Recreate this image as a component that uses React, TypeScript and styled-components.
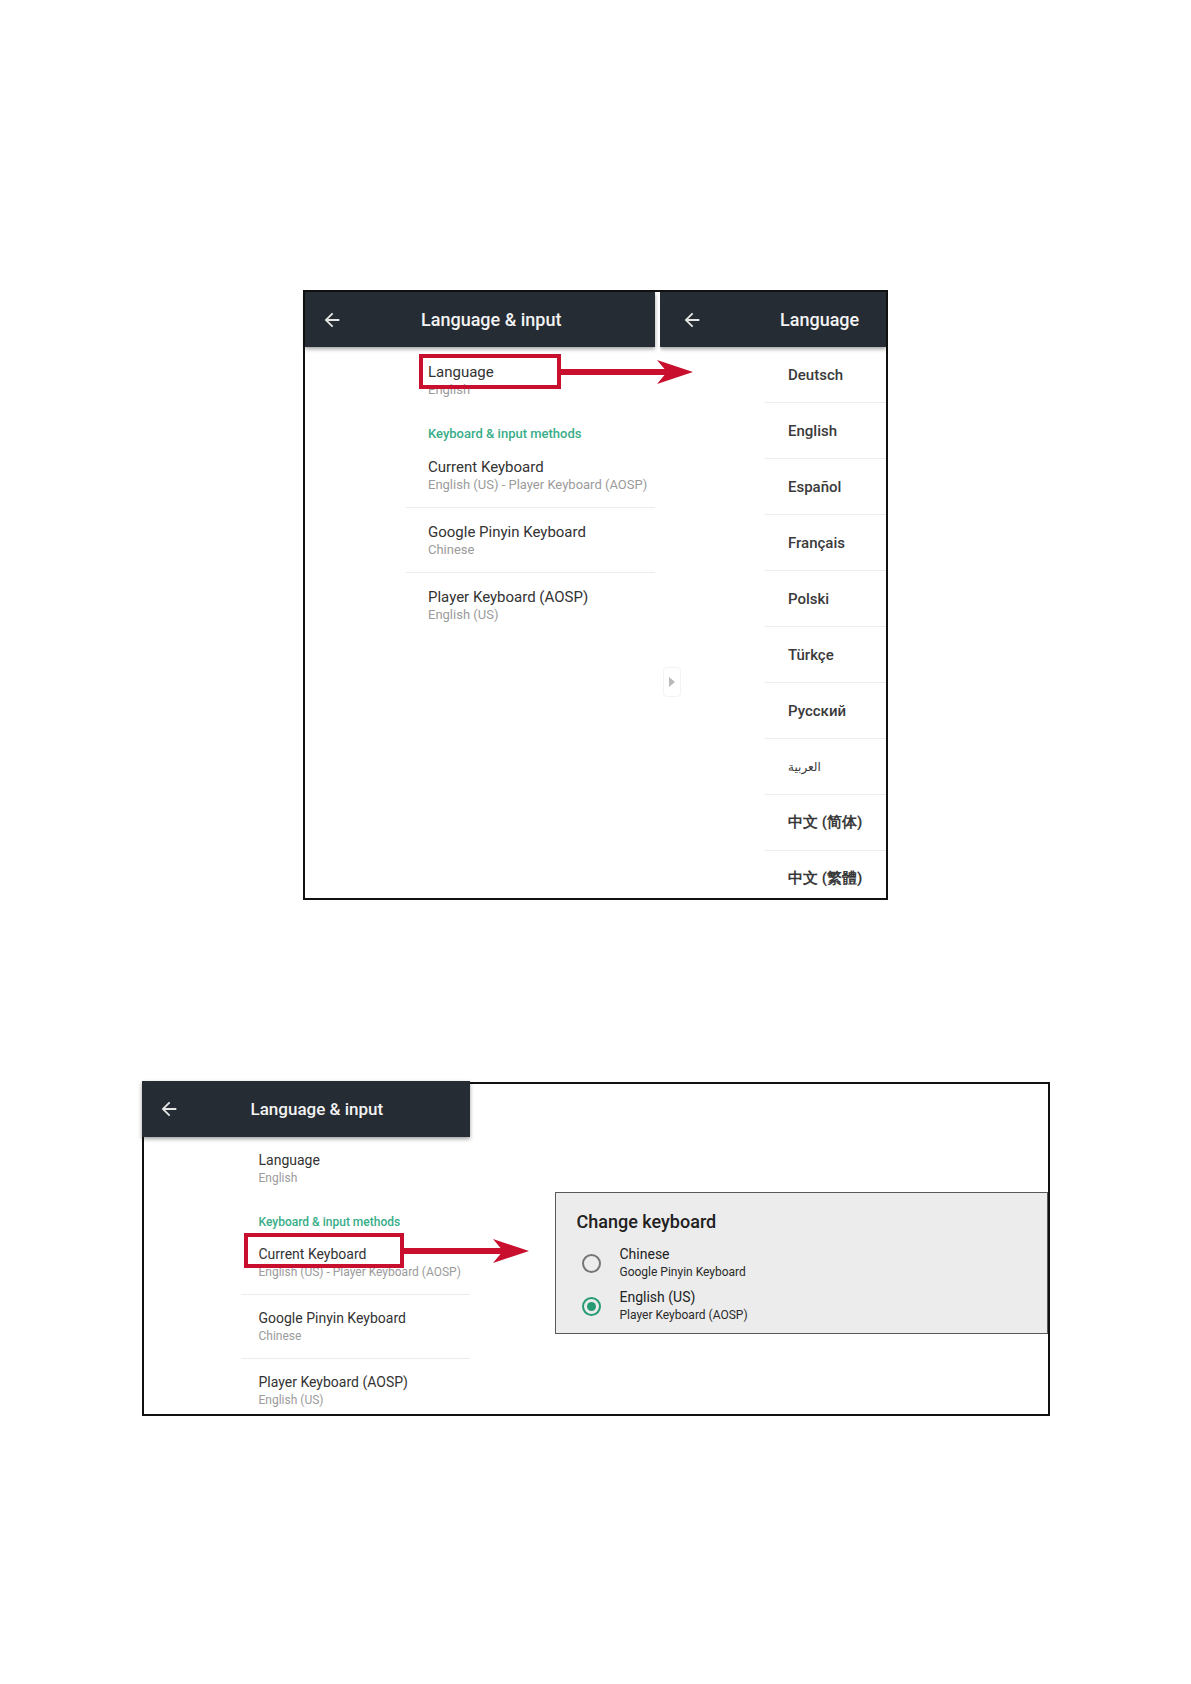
import styled, { createGlobalStyle } from "styled-components";

const GlobalStyle = createGlobalStyle`
  html, body {
    margin: 0;
    padding: 0;
    background: #ffffff;
  }
  body {
    font-family: Roboto, "Noto Sans", "DejaVu Sans", sans-serif;
    color: #333333;
  }
`;

const ACCENT = "#38ad88";
const RADIO_GREEN = "#279b74";
const ANNOTATION_RED = "#c8102e";

const Page = styled.div`
  display: flex;
  flex-direction: column;
  align-items: center;
  gap: 182px;
  padding-top: 290px;
  min-height: 1684px;
  box-sizing: border-box;
`;

const Frame = styled.div<{ $w: number; $h: number }>`
  position: relative;
  display: flex;
  width: ${({ $w }) => $w}px;
  height: ${({ $h }) => $h}px;
  box-sizing: border-box;
  border: 2px solid #111111;
  background: #ffffff;
`;

const Panel = styled.div<{ $w?: number }>`
  display: flex;
  flex-direction: column;
  width: ${({ $w }) => ($w ? `${$w}px` : "auto")};
  flex: ${({ $w }) => ($w ? "0 0 auto" : "1 1 auto")};
  min-width: 0;
`;

const ClipPanel = styled(Panel)`
  overflow: hidden;
`;

const PanelGap = styled.div`
  width: 5px;
  flex: 0 0 auto;
  background: #ffffff;
`;

const AppBar = styled.div<{ $h: number; $bleed?: boolean }>`
  position: relative;
  z-index: 1;
  display: flex;
  align-items: center;
  flex: 0 0 auto;
  height: ${({ $h }) => $h}px;
  margin: ${({ $bleed }) => ($bleed ? "-3px 0 0 -2px" : "0")};
  background: #262c33;
  box-shadow: 0 2px 4px rgba(0, 0, 0, 0.38);
`;

const BackButton = styled.span<{ $left: number }>`
  display: flex;
  margin-left: ${({ $left }) => $left}px;
  color: #e6e6e6;
`;

const BarTitle = styled.h1<{ $left: number; $size: number }>`
  margin: 0 0 0 ${({ $left }) => $left}px;
  font-size: ${({ $size }) => $size}px;
  font-weight: 500;
  color: #f3f3f3;
  white-space: nowrap;
`;

const SettingsList = styled.div`
  display: flex;
  flex-direction: column;
  overflow: hidden;
`;

const SettingItem = styled.div<{
  $indent: number;
  $pad: number;
  $top: number;
  $divider?: boolean;
}>`
  margin-left: ${({ $indent }) => $indent}px;
  padding: ${({ $top }) => $top}px 0 13px ${({ $pad }) => $pad}px;
  border-bottom: ${({ $divider }) => ($divider ? "1px solid #ececec" : "none")};
`;

const ItemTitle = styled.div<{ $size: number }>`
  font-size: ${({ $size }) => $size}px;
  line-height: 18px;
  color: #333333;
  white-space: nowrap;
`;

const ItemSub = styled.div<{ $size: number }>`
  font-size: ${({ $size }) => $size}px;
  line-height: 18px;
  color: #9b9b9b;
  white-space: nowrap;
`;

const CategoryHeading = styled.div<{ $indent: number; $size: number }>`
  margin: 13px 0 0 ${({ $indent }) => $indent}px;
  font-size: ${({ $size }) => $size}px;
  line-height: 18px;
  font-weight: 500;
  color: ${ACCENT};
  white-space: nowrap;
`;

const LanguageList = styled.div`
  display: flex;
  flex-direction: column;
`;

const LanguageRow = styled.div<{ $size?: number; $weight?: number }>`
  display: flex;
  align-items: center;
  flex: 0 0 auto;
  height: 55px;
  margin-left: 105px;
  padding-left: 23px;
  border-bottom: 1px solid #ececec;
  font-size: ${({ $size }) => $size ?? 15}px;
  font-weight: ${({ $weight }) => $weight ?? 500};
  color: #3a3a3a;
  white-space: nowrap;
`;

const ScrollHandle = styled.div`
  position: absolute;
  left: 358px;
  top: 375px;
  width: 18px;
  height: 30px;
  box-sizing: border-box;
  border: 1px solid #f3f3f3;
  border-radius: 4px;
  display: flex;
  align-items: center;
  justify-content: center;

  &::after {
    content: "";
    border-left: 6px solid #b9b9b9;
    border-top: 5px solid transparent;
    border-bottom: 5px solid transparent;
  }
`;

const HighlightBox = styled.div<{ $x: number; $y: number; $w: number; $h: number }>`
  position: absolute;
  left: ${({ $x }) => $x}px;
  top: ${({ $y }) => $y}px;
  width: ${({ $w }) => $w}px;
  height: ${({ $h }) => $h}px;
  box-sizing: border-box;
  border: 4px solid ${ANNOTATION_RED};
  z-index: 2;
`;

const ArrowWrap = styled.svg<{ $x: number; $y: number }>`
  position: absolute;
  left: ${({ $x }) => $x}px;
  top: ${({ $y }) => $y}px;
  z-index: 2;
`;

const DialogArea = styled.div`
  flex: 1 1 auto;
  padding: 108px 0 0 85px;
  min-width: 0;
`;

const Dialog = styled.div`
  box-sizing: border-box;
  background: #ececec;
  border: 1px solid #595959;
  padding: 18px 0 9px 21px;
`;

const DialogTitle = styled.h2`
  margin: 0;
  font-size: 18px;
  line-height: 22px;
  font-weight: 500;
  color: #212121;
`;

const Options = styled.div`
  display: flex;
  flex-direction: column;
  gap: 7px;
  margin-top: 12px;
`;

const Option = styled.div`
  display: flex;
  align-items: center;
`;

const Radio = styled.span<{ $checked?: boolean }>`
  position: relative;
  flex: 0 0 auto;
  width: 19px;
  height: 19px;
  margin: 0 19px 0 5px;
  box-sizing: border-box;
  border-radius: 50%;
  border: 2px solid ${({ $checked }) => ($checked ? RADIO_GREEN : "#767676")};

  &::after {
    content: "";
    display: ${({ $checked }) => ($checked ? "block" : "none")};
    position: absolute;
    left: 3px;
    top: 3px;
    width: 9px;
    height: 9px;
    border-radius: 50%;
    background: ${RADIO_GREEN};
  }
`;

const OptionTitle = styled.div`
  font-size: 14px;
  line-height: 18px;
  color: #222222;
`;

const OptionSub = styled.div`
  font-size: 12px;
  line-height: 18px;
  color: #2a2a2a;
`;

const BackArrow = () => (
  <svg width="22" height="22" viewBox="0 0 24 24" fill="currentColor">
    <path d="M20 11H7.83l5.59-5.59L12 4l-8 8 8 8 1.41-1.41L7.83 13H20v-2z" />
  </svg>
);

const RedArrow = ({ x, y, length }: { x: number; y: number; length: number }) => (
  <ArrowWrap $x={x} $y={y} width={length} height={24} viewBox={`0 0 ${length} 24`}>
    <rect x={0} y={9} width={length - 26} height={6} fill={ANNOTATION_RED} />
    <path
      d={`M${length - 36} 0 L${length} 12 L${length - 36} 24 L${length - 26} 12 Z`}
      fill={ANNOTATION_RED}
    />
  </ArrowWrap>
);

interface SettingsProps {
  compact?: boolean;
}

const keyboards = [
  { title: "Current Keyboard", sub: "English (US) - Player Keyboard (AOSP)" },
  { title: "Google Pinyin Keyboard", sub: "Chinese" },
  { title: "Player Keyboard (AOSP)", sub: "English (US)" },
];

const LanguageSettings = ({ compact }: SettingsProps) => {
  const indent = compact ? 97 : 101;
  const pad = compact ? 18 : 22;
  const titleSize = compact ? 14 : 15;
  const subSize = compact ? 12 : 13;
  return (
    <SettingsList>
      <SettingItem $indent={indent} $pad={pad} $top={compact ? 14 : 16}>
        <ItemTitle $size={titleSize}>Language</ItemTitle>
        <ItemSub $size={subSize}>English</ItemSub>
      </SettingItem>
      <CategoryHeading $indent={indent + pad} $size={subSize}>
        Keyboard &amp; input methods
      </CategoryHeading>
      {keyboards.map((k, i) => (
        <SettingItem
          key={k.title}
          $indent={indent}
          $pad={pad}
          $top={compact ? 14 : 15}
          $divider={i < keyboards.length - 1}
        >
          <ItemTitle $size={titleSize}>{k.title}</ItemTitle>
          <ItemSub $size={subSize}>{k.sub}</ItemSub>
        </SettingItem>
      ))}
    </SettingsList>
  );
};

const languages: { label: string; size?: number; weight?: number; lang?: string }[] = [
  { label: "Deutsch" },
  { label: "English" },
  { label: "Español" },
  { label: "Français" },
  { label: "Polski" },
  { label: "Türkçe" },
  { label: "Русский" },
  { label: "العربية", size: 12 },
  { label: "中文 (简体)", weight: 700, lang: "zh-Hans" },
  { label: "中文 (繁體)", weight: 700, lang: "zh-Hant" },
];

const App = () => (
  <>
    <GlobalStyle />
    <Page>
      <Frame $w={585} $h={610}>
        <Panel $w={350}>
          <AppBar $h={55}>
            <BackButton $left={16}>
              <BackArrow />
            </BackButton>
            <BarTitle $left={78} $size={18}>
              Language &amp; input
            </BarTitle>
          </AppBar>
          <LanguageSettings />
        </Panel>
        <PanelGap />
        <ClipPanel>
          <AppBar $h={55}>
            <BackButton $left={21}>
              <BackArrow />
            </BackButton>
            <BarTitle $left={77} $size={18}>
              Language
            </BarTitle>
          </AppBar>
          <LanguageList>
            {languages.map((l) => (
              <LanguageRow key={l.label} $size={l.size} $weight={l.weight} lang={l.lang}>
                {l.label}
              </LanguageRow>
            ))}
          </LanguageList>
        </ClipPanel>
        <ScrollHandle />
        <HighlightBox $x={114} $y={62} $w={142} $h={35} />
        <RedArrow x={256} y={68} length={132} />
      </Frame>

      <Frame $w={908} $h={334}>
        <Panel $w={326}>
          <AppBar $h={56} $bleed>
            <BackButton $left={16}>
              <BackArrow />
            </BackButton>
            <BarTitle $left={71} $size={17}>
              Language &amp; input
            </BarTitle>
          </AppBar>
          <LanguageSettings compact />
        </Panel>
        <DialogArea>
          <Dialog>
            <DialogTitle>Change keyboard</DialogTitle>
            <Options>
              <Option>
                <Radio />
                <div>
                  <OptionTitle>Chinese</OptionTitle>
                  <OptionSub>Google Pinyin Keyboard</OptionSub>
                </div>
              </Option>
              <Option>
                <Radio $checked />
                <div>
                  <OptionTitle>English (US)</OptionTitle>
                  <OptionSub>Player Keyboard (AOSP)</OptionSub>
                </div>
              </Option>
            </Options>
          </Dialog>
        </DialogArea>
        <HighlightBox $x={100} $y={149} $w={160} $h={35} />
        <RedArrow x={260} y={155} length={125} />
      </Frame>
    </Page>
  </>
);

export default App;
